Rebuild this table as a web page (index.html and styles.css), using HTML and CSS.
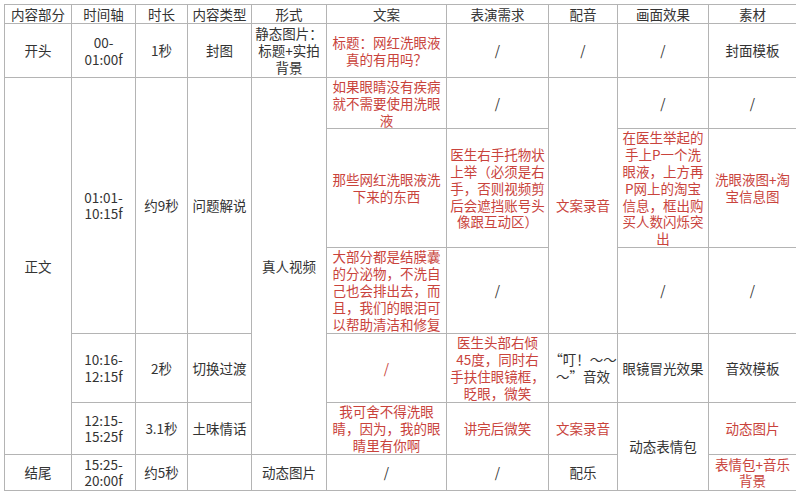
FILE: index.html
```html
<!DOCTYPE html>
<html lang="zh-CN">
<head>
<meta charset="utf-8">
<title>脚本表</title>
<link rel="stylesheet" href="styles.css">
</head>
<body>
<table class="script">
  <colgroup>
    <col class="c1"><col class="c2"><col class="c3"><col class="c4"><col class="c5">
    <col class="c6"><col class="c7"><col class="c8"><col class="c9"><col class="c10">
  </colgroup>
  <tr class="rh">
    <td>内容部分</td><td>时间轴</td><td>时长</td><td>内容类型</td><td>形式</td>
    <td>文案</td><td>表演需求</td><td>配音</td><td>画面效果</td><td>素材</td>
  </tr>
  <tr class="r1">
    <td>开头</td>
    <td><span class="wt">00-&#8203;01:00f</span></td>
    <td>1秒</td>
    <td>封图</td>
    <td><span class="w5">静态图片：标题+实拍背景</span></td>
    <td class="red"><span class="w8">标题：网红洗眼液真的有用吗？</span></td>
    <td>/</td>
    <td>/</td>
    <td>/</td>
    <td>封面模板</td>
  </tr>
  <tr class="r2">
    <td rowspan="5">正文</td>
    <td rowspan="3"><span class="wt">01:01-&#8203;10:15f</span></td>
    <td rowspan="3">约9秒</td>
    <td rowspan="3">问题解说</td>
    <td rowspan="5">真人视频</td>
    <td class="red"><span class="w8">如果眼睛没有疾病就不需要使用洗眼液</span></td>
    <td>/</td>
    <td rowspan="3" class="red">文案录音</td>
    <td>/</td>
    <td>/</td>
  </tr>
  <tr class="r3">
    <td class="red"><span class="w8">那些网红洗眼液洗下来的东西</span></td>
    <td class="red"><span class="w7">医生右手托物状上举（必须是右手，否则视频剪后会遮挡账号头像跟互动区）</span></td>
    <td class="red"><span class="w6">在医生举起的手上P一个洗眼液，上方再P网上的淘宝信息，框出购买人数闪烁突出</span></td>
    <td class="red"><span class="w6">洗眼液图+淘宝信息图</span></td>
  </tr>
  <tr class="r4">
    <td class="red"><span class="w8">大部分都是结膜囊的分泌物，不洗自己也会排出去，而且，我们的眼泪可以帮助清洁和修复</span></td>
    <td>/</td>
    <td>/</td>
    <td>/</td>
  </tr>
  <tr class="r5">
    <td><span class="wt">10:16-&#8203;12:15f</span></td>
    <td>2秒</td>
    <td>切换过渡</td>
    <td class="red">/</td>
    <td class="red"><span class="w7">医生头部右倾45度，同时右手扶住眼镜框，眨眼，微笑</span></td>
    <td><span class="w5">“叮！～～～”音效</span></td>
    <td>眼镜冒光效果</td>
    <td>音效模板</td>
  </tr>
  <tr class="r6">
    <td><span class="wt">12:15-&#8203;15:25f</span></td>
    <td>3.1秒</td>
    <td>土味情话</td>
    <td class="red"><span class="w8">我可舍不得洗眼睛，因为，我的眼睛里有你啊</span></td>
    <td class="red">讲完后微笑</td>
    <td class="red">文案录音</td>
    <td rowspan="2">动态表情包</td>
    <td class="red">动态图片</td>
  </tr>
  <tr class="r7">
    <td>结尾</td>
    <td><span class="wt">15:25-&#8203;20:00f</span></td>
    <td>约5秒</td>
    <td></td>
    <td>动态图片</td>
    <td>/</td>
    <td>/</td>
    <td>配乐</td>
    <td class="red"><span class="w6">表情包+音乐背景</span></td>
  </tr>
</table>
</body>
</html>
```
FILE: styles.css
```css
html, body {
  background: #ffffff;
}
body {
  margin: 4px;
  font-family: "Noto Sans CJK SC", "Noto Sans", sans-serif;
  font-size: 13.5px;
  line-height: 16.8px;
  color: #333333;
}
.script {
  border-collapse: collapse;
  table-layout: fixed;
  width: 792px;
}
.script td {
  border: 1px solid #b4b4b4;
  padding: 0;
  text-align: center;
  vertical-align: middle;
  overflow: visible;
}
.wt, .w5, .w6, .w7, .w8 {
  display: block;
  margin: 0 auto;
}
.wt { width: 3.6em; }
.w5 { width: 5em; }
.w6 { width: 6em; }
.w7 { width: 7em; }
.w8 { width: 8em; }
.c1 { width: 67px; }
.c2 { width: 64px; }
.c3 { width: 52px; }
.c4 { width: 64px; }
.c5 { width: 75px; }
.c6 { width: 120px; }
.c7 { width: 102px; }
.c8 { width: 69px; }
.c9 { width: 91px; }
.c10 { width: 88px; }
.rh { height: 19px; }
.r1 { height: 54px; }
.r2 { height: 51px; }
.r3 { height: 118px; }
.r4 { height: 86px; }
.r5 { height: 69px; }
.r6 { height: 52px; }
.r7 { height: 36px; }
.red {
  color: #c9433c;
}
```
